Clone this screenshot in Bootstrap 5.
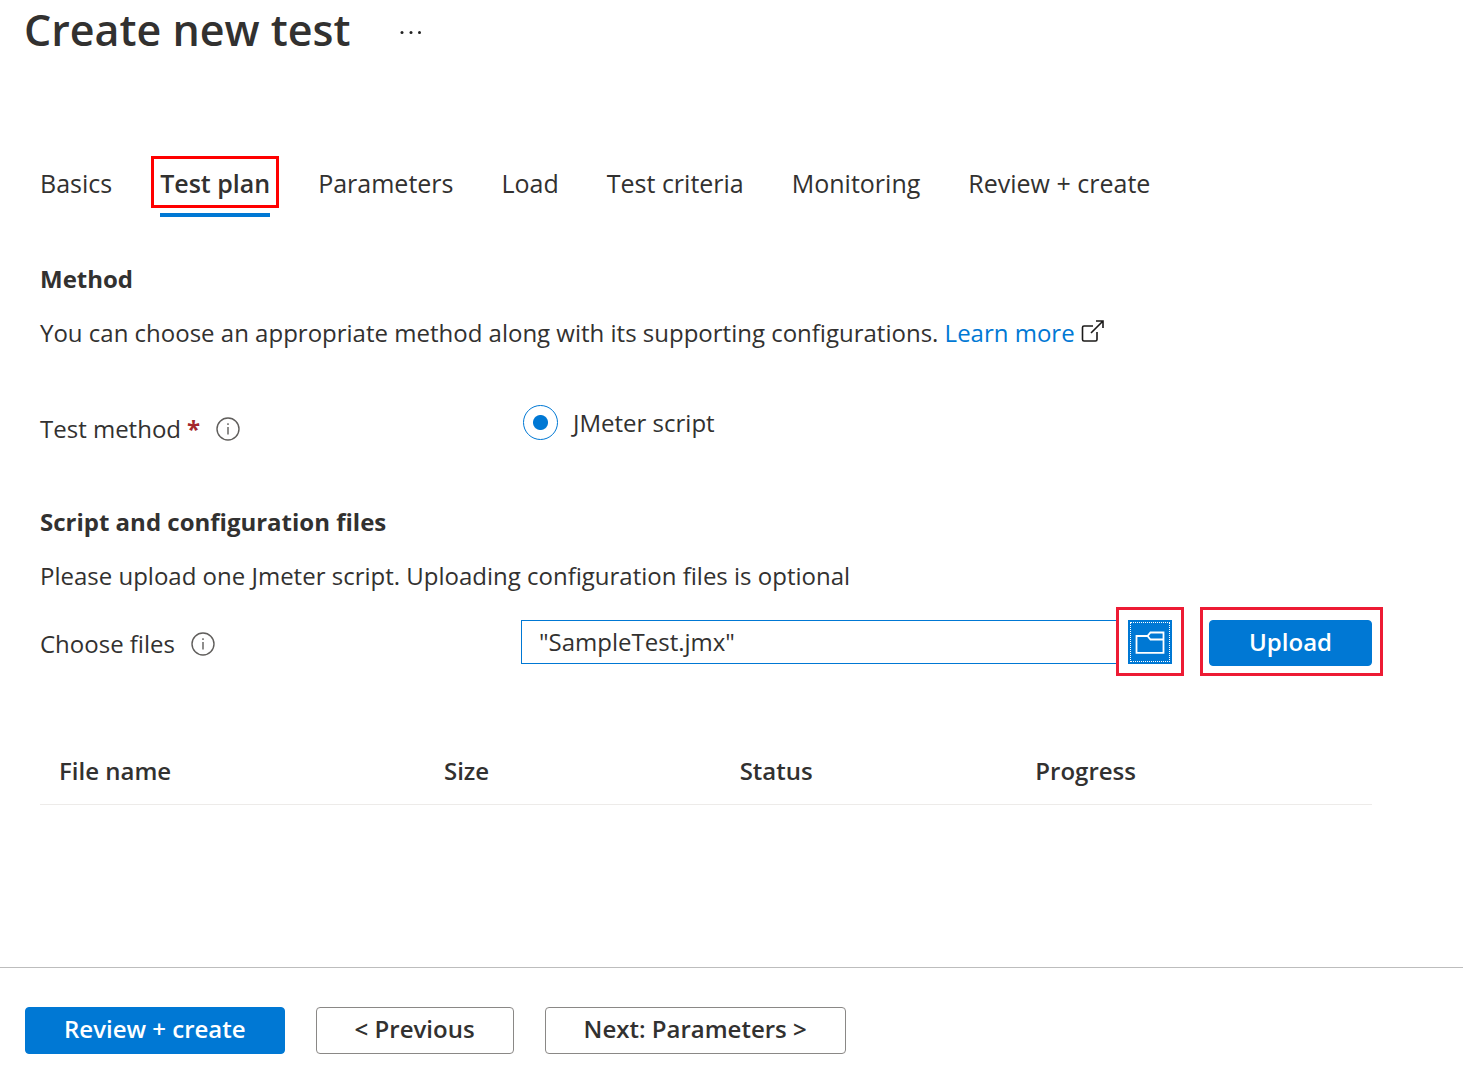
<!DOCTYPE html>
<html lang="en">
<head>
<meta charset="utf-8">
<meta name="viewport" content="width=device-width, initial-scale=1">
<title>Create new test</title>
<link href="https://cdn.jsdelivr.net/npm/bootstrap@5.3.0/dist/css/bootstrap.min.css" rel="stylesheet">
<style>
  :root { --azure: #0078d4; --ink: #323130; --callout: #ed1b34; }
  body { font-family: "Open Sans", "Noto Sans", sans-serif; font-size: 24px; line-height: 32px; color: var(--ink); background: #fff; }
  .page-head { padding: 0 24px; gap: 48px; height: 60px; }
  .page-head h1 { font-size: 43px; line-height: 60px; font-weight: 600; }
  .more-btn { border: 0; background: none; padding: 4px 0 0; line-height: 0; }
  .page-body { padding: 105px 80px 40px 40px; }
  .wizard-tabs { gap: 48px; font-size: 25px; margin-bottom: 46px; }
  .wizard-tabs a { color: var(--ink); text-decoration: none; line-height: 32px; padding-top: 2px; white-space: nowrap; }
  .wizard-tabs a.current { font-weight: 600; padding: 0 0 14px; border-bottom: 4px solid var(--azure); }
  .wizard-tabs a.current span { display: block; padding-top: 2px; outline: 3px solid #f00; outline-offset: 6px; }
  h2 { font-size: 24px; line-height: 32px; font-weight: 700; margin: 0 0 22px; }
  .learn { color: var(--azure); text-decoration: none; }
  .out-icon { vertical-align: -1px; }
  .method-row { margin: 56px 0 61px; }
  .method-row .label-col { padding-top: 8px; }
  .label-col { flex: 0 0 481px; display: flex; align-items: center; }
  .required-star { color: #a4262c; font-weight: 700; margin-left: 6px; }
  .info-icon { margin-left: 16px; }
  .method-radio.form-check-input { width: 35px; height: 35px; margin: 0 15px 0 2px; border: 1px solid var(--azure); }
  .method-radio.form-check-input:checked { background-color: #fff; background-size: auto; background-image: radial-gradient(circle, var(--azure) 7px, transparent 8px); }
  .file-row { margin-top: 15px; }
  .file-row .label-col { padding-top: 5px; }
  .file-box.form-control { height: 44px; margin-top: 1px; font-size: 24px; line-height: 32px; padding: 3px 17px 5px; border: 1px solid var(--azure); border-right: 0; border-radius: 0; color: var(--ink); }
  .callout-box { border: 3px solid var(--callout); padding: 10px 9px 9px; flex: none; line-height: 0; }
  .callout-box.wide { padding: 10px 8px 7px 6px; margin-left: 16px; }
  .browse-btn { width: 44px; height: 44px; padding: 2px; border: 0; background: var(--azure); }
  .browse-btn span { display: flex; width: 100%; height: 100%; align-items: center; justify-content: center; border: 1px dotted #fff; }
  .az-btn { --bs-btn-font-size: 24px; --bs-btn-line-height: 32px; --bs-btn-font-weight: 600; --bs-btn-border-radius: 4px; --bs-btn-padding-x: 39px; --bs-btn-color: var(--ink); --bs-btn-border-color: #8a8886; height: 47px; padding-top: 5px; padding-bottom: 8px; white-space: nowrap; }
  .page-foot .az-btn { --bs-btn-padding-x: 38px; }
  .az-btn.fill { --bs-btn-color: #fff; --bs-btn-bg: var(--azure); --bs-btn-border-color: var(--azure); --bs-btn-hover-bg: #106ebe; --bs-btn-hover-color: #fff; }
  .callout-box .az-btn { height: 46px; }
  .files-table { --bs-table-color: var(--ink); width: calc(100% - 11px); table-layout: fixed; margin: 79px 0 0; }
  .files-table.table th { font-weight: 600; padding: 0 0 17px 19px; border-color: #edebe9; }
  .col-name { width: 28.9%; }
  .col-mid { width: 22.2%; }
  .page-foot { padding: 39px 24px 28px 25px; gap: 31px; border-top: 1px solid #bdbdbd; }
</style>
</head>
<body>
<div class="d-flex flex-column min-vh-100">
  <header class="page-head d-flex align-items-center">
    <h1 class="m-0">Create new test</h1>
    <button class="more-btn" type="button" aria-label="More actions">
      <svg width="26" height="8" viewBox="0 0 26 8" fill="#222"><circle cx="3" cy="4.500" r="1.5"/><circle cx="12" cy="4.500" r="1.5"/><circle cx="20.500" cy="4.500" r="1.5"/></svg>
    </button>
  </header>

  <main class="page-body flex-grow-1">
    <nav class="wizard-tabs d-flex align-items-start" aria-label="Steps">
      <a href="#">Basics</a>
      <a href="#" class="current" aria-current="step"><span>Test plan</span></a>
      <a href="#">Parameters</a>
      <a href="#">Load</a>
      <a href="#">Test criteria</a>
      <a href="#">Monitoring</a>
      <a href="#">Review + create</a>
    </nav>

    <section>
      <h2>Method</h2>
      <p class="m-0">You can choose an appropriate method along with its supporting configurations.
        <a class="learn" href="#">Learn more</a>
        <svg class="out-icon" width="24" height="24" viewBox="0 0 24 24" fill="none" stroke="#1b1a19" stroke-width="1.6" aria-hidden="true"><path d="M12 7H3Q1.500 7 1.500 8.500V20.500Q1.500 22 3 22H14.500Q16 22 16 20.500V13"/><path d="M10 14 22 2M15 2H22V9"/></svg>
      </p>
      <div class="method-row d-flex align-items-start">
        <div class="label-col">
          <span id="method-label">Test method</span><span class="required-star">*</span>
          <svg class="info-icon" width="24" height="24" viewBox="0 0 24 24" fill="none" stroke="#605e5c" stroke-width="1.4" aria-hidden="true"><circle cx="12" cy="12" r="11"/><path d="M12 10V17.500M12 6.200V8"/></svg>
        </div>
        <div class="d-flex align-items-center" role="radiogroup" aria-labelledby="method-label">
          <input class="form-check-input method-radio" type="radio" name="method" id="jmeter" checked>
          <label for="jmeter">JMeter script</label>
        </div>
      </div>
    </section>

    <section>
      <h2>Script and configuration files</h2>
      <p class="m-0">Please upload one Jmeter script. Uploading configuration files is optional</p>
      <div class="file-row d-flex align-items-center">
        <div class="label-col">
          <label for="files">Choose files</label>
          <svg class="info-icon" width="24" height="24" viewBox="0 0 24 24" fill="none" stroke="#605e5c" stroke-width="1.4" aria-hidden="true"><circle cx="12" cy="12" r="11"/><path d="M12 10V17.500M12 6.200V8"/></svg>
        </div>
        <input class="form-control file-box" type="text" id="files" value='"SampleTest.jmx"'>
        <div class="callout-box">
          <button class="browse-btn" type="button" aria-label="Browse for files"><span>
            <svg width="30" height="24" viewBox="0 0 30 24" fill="none" stroke="#fff" stroke-width="1.8" aria-hidden="true"><path d="M1.500 6H12.500L15.500 2.500H28.500V22.800H1.500Z"/><path d="M12.500 6 15.500 9.500H28.500"/></svg>
          </span></button>
        </div>
        <div class="callout-box wide">
          <button class="btn az-btn fill" type="button">Upload</button>
        </div>
      </div>
      <table class="table files-table">
        <thead>
          <tr><th class="col-name" scope="col">File name</th><th class="col-mid" scope="col">Size</th><th class="col-mid" scope="col">Status</th><th scope="col">Progress</th></tr>
        </thead>
      </table>
    </section>
  </main>

  <footer class="page-foot d-flex">
    <button class="btn az-btn fill" type="button">Review + create</button>
    <button class="btn az-btn" type="button">&lt; Previous</button>
    <button class="btn az-btn" type="button">Next: Parameters &gt;</button>
  </footer>
</div>
<script src="https://cdn.jsdelivr.net/npm/bootstrap@5.3.0/dist/js/bootstrap.bundle.min.js"></script>
</body>
</html>
